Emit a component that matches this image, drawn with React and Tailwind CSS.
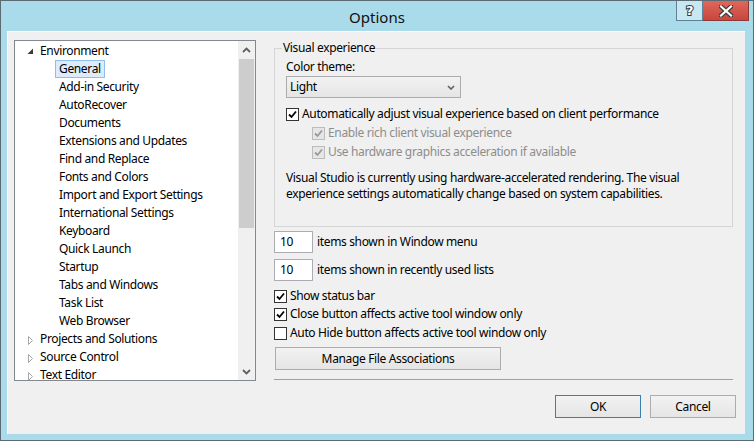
import React from "react";

const treeItems = [
  { label: "Environment", level: 0, expanded: true },
  { label: "General", level: 1, selected: true },
  { label: "Add-in Security", level: 1 },
  { label: "AutoRecover", level: 1 },
  { label: "Documents", level: 1 },
  { label: "Extensions and Updates", level: 1 },
  { label: "Find and Replace", level: 1 },
  { label: "Fonts and Colors", level: 1 },
  { label: "Import and Export Settings", level: 1 },
  { label: "International Settings", level: 1 },
  { label: "Keyboard", level: 1 },
  { label: "Quick Launch", level: 1 },
  { label: "Startup", level: 1 },
  { label: "Tabs and Windows", level: 1 },
  { label: "Task List", level: 1 },
  { label: "Web Browser", level: 1 },
  { label: "Projects and Solutions", level: 0 },
  { label: "Source Control", level: 0 },
  { label: "Text Editor", level: 0 },
];

function Checkbox({ checked, disabled }) {
  return (
    <span
      className={
        "w-[13px] h-[13px] shrink-0 flex items-center justify-center border " +
        (disabled ? "border-[#bcbcbc] bg-[#e6e6e6]" : "border-[#333333] bg-white")
      }
    >
      {checked && (
        <svg width="9" height="9" viewBox="0 0 9 9">
          <path
            d="M1 4.5 L3.5 7 L8 1.5"
            fill="none"
            stroke={disabled ? "#9a9a9a" : "#000"}
            strokeWidth="1.8"
          />
        </svg>
      )}
    </span>
  );
}

function CheckRow({ checked, disabled, children, className = "" }) {
  return (
    <div className={"flex items-center h-[16px] " + className}>
      <Checkbox checked={checked} disabled={disabled} />
      <span className={"ml-[3px] whitespace-nowrap " + (disabled ? "text-[#8d8d8d]" : "text-black")}>{children}</span>
    </div>
  );
}

function TreeArrow({ expanded }) {
  if (expanded) {
    return (
      <svg width="7" height="7" viewBox="0 0 7 7" className="mt-[1px]">
        <path d="M6 0.5 L6 6 L0.5 6 Z" fill="#3a3a3a" />
      </svg>
    );
  }
  return (
    <svg width="7" height="9" viewBox="0 0 7 9" className="mt-[2px]">
      <path d="M1.5 0.5 L5.5 4.5 L1.5 8.5 Z" fill="#fff" stroke="#a6a6a6" strokeWidth="1" />
    </svg>
  );
}

function Tree() {
  return (
    <div className="w-[242px] h-[341px] border border-[#828790] bg-white flex overflow-hidden">
      <div className="flex-1 overflow-hidden pt-[1px]">
        {treeItems.map((item) =>
          item.level === 0 ? (
            <div key={item.label} className="h-[18px] flex items-center pl-[12px]">
              <span className="w-[13px] flex items-center">
                <TreeArrow expanded={item.expanded} />
              </span>
              <span className="whitespace-nowrap">{item.label}</span>
            </div>
          ) : (
            <div key={item.label} className="h-[18px] flex items-center pl-[40px]">
              <span
                className={
                  "h-[18px] flex items-center px-[3px] border whitespace-nowrap " +
                  (item.selected ? "border-[#8fbfe8] bg-[#dcecfc]" : "border-transparent")
                }
              >
                {item.label}
              </span>
            </div>
          )
        )}
      </div>
      <div className="w-[17px] bg-[#f0f0f0] flex flex-col">
        <div className="h-[17px] flex items-center justify-center">
          <svg width="9" height="6" viewBox="0 0 9 6">
            <path d="M1 5 L4.5 1.5 L8 5" fill="none" stroke="#606060" strokeWidth="1.8" />
          </svg>
        </div>
        <div className="mx-[1px] mt-[1px] h-[169px] bg-[#cdcdcd]" />
        <div className="flex-1" />
        <div className="h-[17px] flex items-center justify-center">
          <svg width="9" height="6" viewBox="0 0 9 6">
            <path d="M1 1 L4.5 4.5 L8 1" fill="none" stroke="#606060" strokeWidth="1.8" />
          </svg>
        </div>
      </div>
    </div>
  );
}

function NumberBox({ value }) {
  return (
    <div className="w-[39px] h-[22px] border border-[#abadb3] bg-white flex items-center pl-[5px]">
      {value}
    </div>
  );
}

function Button({ children, primary, className = "" }) {
  return (
    <div
      className={
        "h-[23px] flex items-center justify-center border bg-gradient-to-b from-[#f2f2f2] to-[#e5e5e5] " +
        (primary ? "border-[#3c7fb1] " : "border-[#acacac] ") +
        className
      }
    >
      {children}
    </div>
  );
}

export default function App() {
  return (
    <div className="w-[754px] h-[441px] border border-[#5c6a73] bg-[#a9dbea] flex flex-col font-['Noto_Sans',sans-serif] text-[12px] tracking-[-0.35px] text-black leading-[16px] select-none">
      <div className="relative h-[30px] flex items-center justify-center shrink-0">
        <span className="text-[15px] tracking-normal text-[#111] mt-[1px]">Options</span>
        <div className="absolute top-0 right-[4px] flex">
          <div className="w-[27px] h-[20px] bg-[#c7e7f2] border border-[#5f8396] border-t-0 flex items-center justify-center">
            <span className="font-['DejaVu_Sans',sans-serif] font-bold text-[13px] text-white [paint-order:stroke] [-webkit-text-stroke:2px_#3a3a3a] leading-none">?</span>
          </div>
          <div className="w-[46px] h-[20px] bg-gradient-to-b from-[#e0665c] to-[#c7463d] border border-[#8b3a33] border-t-0 border-l-0 flex items-center justify-center">
            <svg width="14" height="12" viewBox="0 0 14 12">
              <path d="M2 1.5 L12 10.5 M12 1.5 L2 10.5" stroke="#3b3b3b" strokeWidth="4.5" strokeLinecap="square" />
              <path d="M2 1.5 L12 10.5 M12 1.5 L2 10.5" stroke="#fff" strokeWidth="2.2" strokeLinecap="square" />
            </svg>
          </div>
        </div>
      </div>

      <div className="ml-[6px] w-[738px] h-[403px] bg-[#f0f0f0] flex border-t border-l border-white">
        <div className="pt-[8px] pl-[6px]">
          <Tree />
        </div>

        <div className="ml-[18px] w-[462px] pt-[8px] flex flex-col">
          <fieldset className="w-[459px] h-[187px] border border-[#d5d5d5] pt-[3px]">
            <legend className="ml-[7px] px-[1px] leading-[16px]">Visual experience</legend>
            <div className="pl-[11px]">
              <div className="h-[16px]">Color theme:</div>
              <div className="mt-[1px] w-[175px] h-[22px] border border-[#acacac] bg-gradient-to-b from-[#f2f2f2] to-[#e5e5e5] flex items-center justify-between pl-[3px] pr-[5px]">
                <span>Light</span>
                <svg width="8" height="5" viewBox="0 0 8 5">
                  <path d="M1 1 L4 4 L7 1" fill="none" stroke="#606060" strokeWidth="1.6" />
                </svg>
              </div>
              <CheckRow checked className="mt-[8px]">
                Automatically adjust visual experience based on client performance
              </CheckRow>
              <CheckRow checked disabled className="mt-[3px] ml-[26px]">
                Enable rich client visual experience
              </CheckRow>
              <CheckRow checked disabled className="mt-[3px] ml-[26px]">
                Use hardware graphics acceleration if available
              </CheckRow>
              <p className="mt-[10px] leading-[16px]">
                Visual Studio is currently using hardware-accelerated rendering. The visual
                <br />
                experience settings automatically change based on system capabilities.
              </p>
            </div>
          </fieldset>

          <div className="mt-[4px] flex items-center gap-[4px]">
            <NumberBox value="10" />
            <span>items shown in Window menu</span>
          </div>
          <div className="mt-[6px] flex items-center gap-[4px]">
            <NumberBox value="10" />
            <span>items shown in recently used lists</span>
          </div>

          <CheckRow checked className="mt-[7px]">Show status bar</CheckRow>
          <CheckRow checked className="mt-[2px]">Close button affects active tool window only</CheckRow>
          <CheckRow className="mt-[3px]">Auto Hide button affects active tool window only</CheckRow>

          <Button className="mt-[6px] ml-[1px] w-[226px]">Manage File Associations</Button>

          <div className="mt-[9px] w-[459px] h-[1px] bg-[#a0a0a0]" />

          <div className="mt-[15px] flex justify-end gap-[9px]">
            <Button primary className="w-[86px]">OK</Button>
            <Button className="w-[86px]">Cancel</Button>
          </div>
        </div>
      </div>
    </div>
  );
}
